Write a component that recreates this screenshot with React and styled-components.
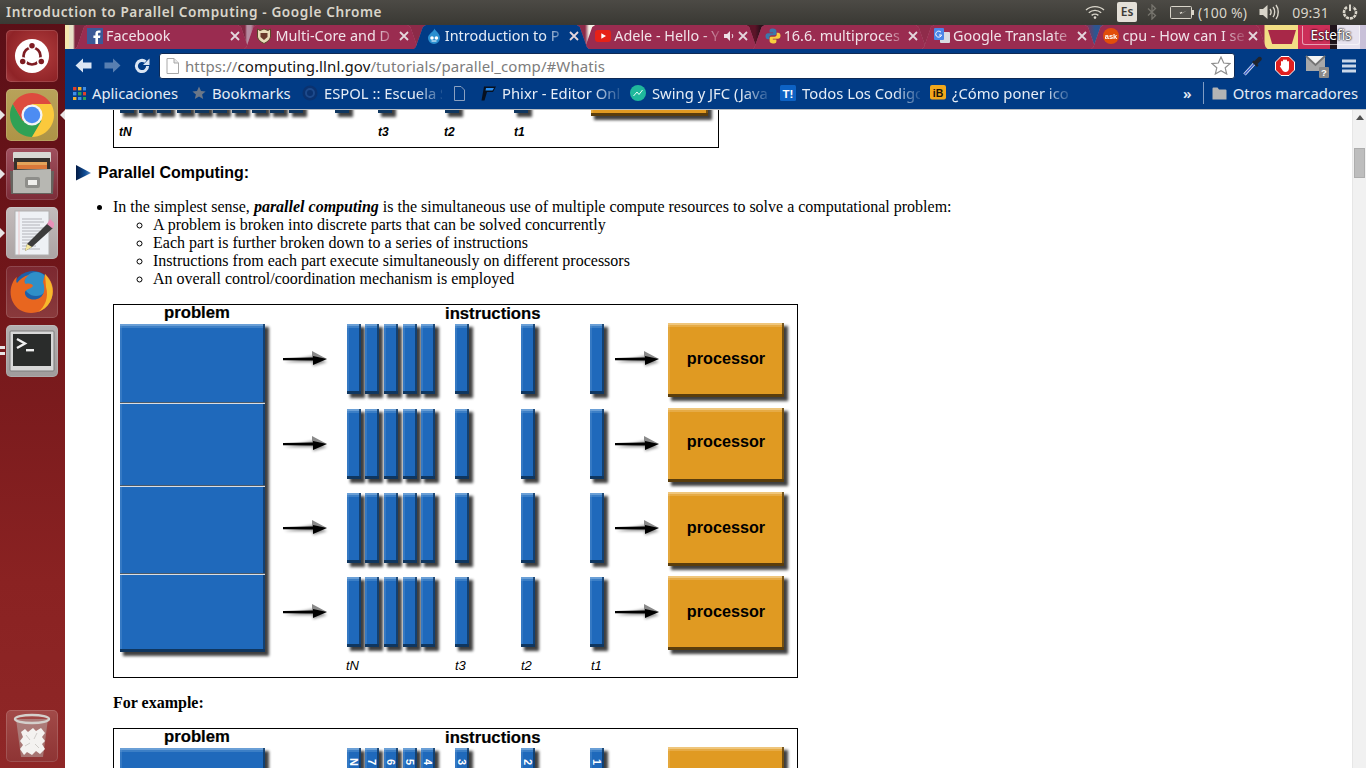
import React from 'react';
import styled, { createGlobalStyle } from 'styled-components';

const UI_FONT = '"Noto Sans", "Open Sans", sans-serif';

const GlobalStyle = createGlobalStyle`
  html, body {
    margin: 0;
    padding: 0;
    width: 1366px;
    height: 768px;
    overflow: hidden;
    background: #fff;
  }
  #root { height: 768px; }
`;

const Screen = styled.div`
  width: 1366px;
  height: 768px;
  display: flex;
  flex-direction: column;
  overflow: hidden;
`;

/* ---------- ubuntu panel ---------- */
const Panel = styled.header`
  flex: 0 0 24px;
  display: flex;
  align-items: center;
  padding: 0 8px 0 6px;
  box-sizing: border-box;
  background: linear-gradient(#4c4a45, #3a3934);
  color: #d9d5ca;
  font: 400 14px ${UI_FONT};
`;

const WindowTitle = styled.div`
  flex: 1;
  padding-bottom: 2px;
  font-weight: 600;
  font-size: 13.6px;
  letter-spacing: 0.61px;
  white-space: nowrap;
`;

const Indicators = styled.div`
  display: flex;
  align-items: center;
  height: 24px;
`;

const LangBox = styled.span`
  width: 20px;
  height: 20px;
  margin: 0 10px 0 12px;
  border-radius: 2px;
  background: #e4e0d8;
  color: #3c3b37;
  font-size: 12px;
  font-weight: 600;
  line-height: 20px;
  text-align: center;
`;

const PanelText = styled.span`
  margin-left: ${p => p.$ml}px;
  font-size: 14px;
  letter-spacing: 0.2px;
  white-space: nowrap;
`;

const PanelGap = styled.span`
  width: ${p => p.$w}px;
`;

const Body = styled.div`
  flex: 1;
  display: flex;
  min-height: 0;
`;

/* ---------- launcher ---------- */
const Launcher = styled.nav`
  flex: 0 0 65px;
  display: flex;
  flex-direction: column;
  align-items: flex-start;
  gap: 7px;
  padding: 6px 0 6px 6px;
  box-sizing: border-box;
  background: linear-gradient(#5b0f17, #6e1519 30%, #8a2222 75%, #8f2727);
`;

const Tile = styled.div`
  position: relative;
  width: 52px;
  height: 52px;
  display: flex;
  align-items: center;
  justify-content: center;
  border-radius: 5px;
  background: ${p => p.$bg};
  box-shadow: inset 0 0 0 1px rgba(255, 255, 255, 0.14);
  ${p => p.$bottom && 'margin-top: auto;'}
`;

const Pip = styled.span`
  position: absolute;
  top: ${p => p.$top || 21}px;
  ${p => p.$right
    ? 'right: -7px; border-right: 5px solid #e8e4e4;'
    : 'left: -6px; border-left: 5px solid #e8e4e4;'}
  border-top: 5px solid transparent;
  border-bottom: 5px solid transparent;
`;

const SmallPip = styled.span`
  position: absolute;
  left: -6px;
  top: ${p => p.$top}px;
  width: 5px;
  height: 3px;
  background: #e8e4e4;
`;

/* ---------- browser ---------- */
const Browser = styled.div`
  flex: 1;
  min-width: 0;
  display: flex;
  flex-direction: column;
`;

const TabStrip = styled.div`
  position: relative;
  flex: 0 0 25px;
  display: flex;
  align-items: flex-end;
  padding-left: 10px;
  background: linear-gradient(90deg, #f4e7b0 0 4px, #e9e2c8 4px 8px, #7f2741 10px 180px, #b58ba0 182px 186px, #8c2a48 190px 520px, #f5efe6 524px 532px, #5c1428 536px 690px, #30101c 695px 700px, #8f2b4a 706px 1020px, #2d5590 1030px 1034px, #9a2a4d 1040px 1199px, #f2df85 1200px 1233px, #cc2e58 1233px 1265px, #20141c 1265px 1272px, #e6e2ee 1272px 1295px, #c8c0d8 1295px);
  border-top: 1px solid #3a3934;
  box-sizing: border-box;
`;

const TabShell = styled.div`
  position: relative;
  z-index: ${p => (p.$active ? 2 : 1)};
  flex: 0 0 175px;
  height: 24px;
  margin-right: -5.6px;
  filter: drop-shadow(0.5px 0 0 rgba(255, 255, 255, 0.35));
`;

const TabBody = styled.div`
  height: 100%;
  display: flex;
  align-items: center;
  gap: 3px;
  padding: 0 10px 3px 12px;
  box-sizing: border-box;
  background: ${p => (p.$active ? '#013b85' : '#9a2c50')};
  color: ${p => (p.$active ? '#e6edf6' : '#f0e2e8')};
  font: 400 14.4px ${UI_FONT};
  clip-path: polygon(0 100%, 2px 92%, 9px 8%, 12px 0, calc(100% - 12px) 0, calc(100% - 9px) 8%, calc(100% - 2px) 92%, 100% 100%);
`;

const TabTitle = styled.span`
  flex: 1;
  min-width: 0;
  overflow: hidden;
  white-space: nowrap;
  mask-image: linear-gradient(90deg, #000 82%, rgba(0, 0, 0, 0.15));
`;

const NewTab = styled.div`
  width: 28px;
  height: 14px;
  margin: 0 0 5px 6px;
  background: #a82848;
  clip-path: polygon(0 0, 100% 0, 85% 100%, 15% 100%);
`;

const Profile = styled.span`
  position: absolute;
  top: 1px;
  right: 6px;
  width: 56px;
  height: 18px;
  border: 1px solid rgba(255, 255, 255, 0.55);
  border-top: 0;
  border-radius: 0 0 3px 3px;
  color: #fff;
  font: 400 13.5px/19px ${UI_FONT};
  text-align: center;
  text-shadow: 0 0 2px #000, 0 0 2px #000;
`;

const Toolbar = styled.div`
  flex: 0 0 33px;
  display: flex;
  align-items: center;
  padding-left: 4px;
  box-sizing: border-box;
  background: #013b85;
`;

const NavButton = styled.span`
  flex: 0 0 29px;
  display: flex;
  justify-content: center;
  opacity: ${p => (p.$dim ? 0.4 : 1)};
`;

const Omnibox = styled.div`
  flex: 0 0 1076px;
  height: 26px;
  margin-left: 3px;
  display: flex;
  align-items: center;
  padding: 0 3px 0 6px;
  box-sizing: border-box;
  border: 1px solid #0e2a55;
  border-radius: 3px;
  background: #fff;
  font: 400 15px ${UI_FONT};
  color: #7c7c7c;
`;

const Url = styled.div`
  flex: 1;
  margin-left: 6px;
  white-space: nowrap;
  letter-spacing: 0.1px;
  b { font-weight: 400; color: #111; }
`;

const Actions = styled.div`
  display: flex;
  align-items: center;
  margin-left: 2px;
`;

const ActionSlot = styled.span`
  flex: 0 0 32px;
  width: 32px;
  height: 24px;
  display: flex;
  align-items: center;
  justify-content: center;
`;

const BookmarkBar = styled.div`
  flex: 0 0 27px;
  display: flex;
  align-items: center;
  padding: 0 8px 5px 8px;
  box-sizing: border-box;
  background: #013b85;
  border-bottom: 1px solid #b9bdc2;
  color: #e6edf6;
  font: 400 14.8px ${UI_FONT};
`;

const Bookmark = styled.div`
  flex: 0 0 ${p => p.$w}px;
  width: ${p => p.$w}px;
  display: flex;
  align-items: center;
  gap: 6px;
  overflow: hidden;
`;

const BookmarkLabel = styled.span`
  white-space: nowrap;
  ${p => p.$fade && `
    max-width: 118px;
    overflow: hidden;
    mask-image: linear-gradient(90deg, #000 78%, rgba(0, 0, 0, 0.15));
  `}
`;

const BarEnd = styled.div`
  margin-left: auto;
  display: flex;
  align-items: center;
  gap: 6px;
`;

const Chevrons = styled.span`
  margin-right: 5px;
  font-size: 15px;
  font-weight: 600;
`;

const BarDivider = styled.span`
  width: 1px;
  height: 22px;
  margin-right: 2px;
  background: #7f9cc4;
`;

const Viewport = styled.div`
  flex: 1;
  min-height: 0;
  display: flex;
`;

const PageArea = styled.main`
  flex: 1;
  min-width: 0;
  overflow: hidden;
  color: #000;
  font: 16px/18px "Liberation Serif", "Times New Roman", serif;
`;

const Scrollbar = styled.div`
  position: relative;
  flex: 0 0 14px;
  background: #f1f1f1;
  border-left: 1px solid #e6e6e6;
  box-sizing: border-box;
`;

const ScrollUp = styled.span`
  position: absolute;
  top: 5px;
  left: 3px;
  border-left: 4px solid transparent;
  border-right: 4px solid transparent;
  border-bottom: 5px solid #505050;
`;

const ScrollThumb = styled.span`
  position: absolute;
  top: 38px;
  left: 1px;
  width: 11px;
  height: 30px;
  background: #bdbdbd;
  border: 1px solid #adadad;
  box-sizing: border-box;
`;

/* ---------- page content ---------- */
const PartialFrame = styled.div`
  width: 604px;
  height: 37px;
  margin-left: 48px;
  border: 1px solid #000;
  border-top: 0;
  overflow: hidden;
`;

const SectionHeading = styled.h2`
  display: flex;
  align-items: center;
  gap: 7px;
  height: 18px;
  margin: 16px 0 0 11px;
  font: 700 16px/18px "Liberation Sans", Arial, sans-serif;
`;

const OuterList = styled.ul`
  margin: 16px 0 0;
  padding-left: 48px;
`;

const InnerList = styled.ul`
  margin: 0;
  padding-left: 40px;
  list-style: circle;
`;

const Frame = styled.div`
  width: 683px;
  height: 372px;
  margin: ${p => p.$mt}px 0 0 48px;
  border: 1px solid #000;
  overflow: hidden;
`;

const Caption = styled.p`
  margin: 16px 0 0 48px;
  font-weight: 700;
`;

const Drawing = styled.svg`
  display: block;
`;

const BLUE = { fill: '#1f69bb', light: '#6a9fd6', dark: '#0f365f' };
const ORANGE = { fill: '#e09a22', light: '#efc67c', dark: '#5a3d0c' };
const BAR_X = [347, 365, 384, 403, 421, 455, 521, 590];
const BAR_NAMES = ['N', '7', '6', '5', '4', '3', '2', '1'];
const ROW_TOPS = [324, 409, 493, 577];
const PROC_TOPS = [323, 408, 492, 576];
const ARROW_Y = [359, 444, 528, 612];
const PROC_TEXT_Y = [364, 447, 533, 617];
const LABEL_FONT = '"Liberation Sans", Arial, sans-serif';

const Defs = ({ id }) => (
  <defs>
    <filter id={id} x="-30%" y="-30%" width="160%" height="160%">
      <feGaussianBlur stdDeviation="1.8" />
    </filter>
  </defs>
);

const Bevel = ({ x, y, w, h, tone, blur }) => (
  <g>
    <rect x={x + 3} y={y + 3} width={w + 1} height={h + 1} fill="#000" opacity="0.75" filter={`url(#${blur})`} />
    <rect x={x} y={y} width={w} height={h} fill={tone.fill} />
    <rect x={x} y={y} width="2" height={h} fill={tone.light} opacity="0.3" />
    <rect x={x} y={y} width={w} height="2" fill={tone.light} />
    <rect x={x} y={y + 2} width={w} height="2" fill={tone.light} opacity="0.4" />
    <rect x={x + w - 2} y={y} width="2" height={h} fill={tone.dark} opacity="0.8" />
    <rect x={x} y={y + h - 3} width={w} height="3" fill={tone.dark} />
  </g>
);

const Arrow = ({ x, y, blur }) => (
  <g>
    <path d={`M${x + 1} ${y + 3} L${x + 30} ${y + 3} L${x + 30} ${y + 7} L${x + 44} ${y + 3} L${x + 30} ${y - 3} Z`} fill="#000" opacity="0.45" filter={`url(#${blur})`} />
    <path d={`M${x + 29} ${y - 8} L${x + 44} ${y} L${x + 29} ${y} Z`} fill="#8a8a8a" />
    <path d={`M${x} ${y - 1} L${x + 30} ${y - 1.6} L${x + 30} ${y - 3} L${x + 44} ${y} L${x + 30} ${y + 6} L${x + 30} ${y + 1.4} L${x} ${y + 1.2} Z`} fill="#000" />
  </g>
);

const Heading = ({ x, y, children }) => (
  <text x={x} y={y} fontFamily={LABEL_FONT} fontWeight="700" fontSize="16.7" fill="#000" stroke="#000" strokeWidth="0.2">{children}</text>
);

const Tick = ({ x, y, size = 13, weight = 400, children }) => (
  <text x={x} y={y} fontFamily={LABEL_FONT} fontStyle="italic" fontWeight={weight} fontSize={size} fill="#000">{children}</text>
);

// both big figures share the same picture, the second one has numbered bars
const ParallelFigure = ({ id, numbered }) => (
  <Drawing width="683" height="372" viewBox="114 305 683 372">
    <Defs id={id} />
    <Heading x={164} y={318}>problem</Heading>
    <Heading x={445} y={319}>instructions</Heading>
    <Bevel x={120} y={324} w={145} h={328} tone={BLUE} blur={id} />
    {[403, 486, 574].map(y => (
      <g key={y}>
        <rect x="120" y={y - 1} width="145" height="1" fill="#4c5a68" />
        <rect x="120" y={y} width="145" height="1" fill="#d9dee4" />
      </g>
    ))}
    {ROW_TOPS.map((top, r) => (
      <g key={top}>
        <Arrow x={283} y={ARROW_Y[r]} blur={id} />
        {BAR_X.map((x, i) => (
          <g key={x}>
            <Bevel x={x} y={top} w={14} h={70} tone={BLUE} blur={id} />
            {numbered && r === 0 && (
              <text x={x + 7} y={338} transform={`rotate(90 ${x + 7} 338)`} dy="4" textAnchor="middle" fontFamily={LABEL_FONT} fontWeight="700" fontSize="11" fill="#fff">{BAR_NAMES[i]}</text>
            )}
          </g>
        ))}
        <Arrow x={615} y={ARROW_Y[r]} blur={id} />
        <Bevel x={668} y={PROC_TOPS[r]} w={116} h={74} tone={ORANGE} blur={id} />
        <text x={726} y={PROC_TEXT_Y[r]} textAnchor="middle" fontFamily={LABEL_FONT} fontWeight="700" fontSize="16.2" fill="#000">processor</text>
      </g>
    ))}
    <Tick x={346} y={670}>tN</Tick>
    <Tick x={455} y={670}>t3</Tick>
    <Tick x={521} y={670}>t2</Tick>
    <Tick x={591} y={670}>t1</Tick>
  </Drawing>
);

const PartialFigure = () => (
  <Drawing width="604" height="37" viewBox="114 109 604 37">
    <Defs id="topBlur" />
    {[120, 139, 157, 177, 195, 213, 232, 252, 270, 289, 335, 378, 445, 514].map(x => (
      <Bevel key={x} x={x} y={60} w={14} h={52} tone={BLUE} blur="topBlur" />
    ))}
    <Bevel x={591} y={60} w={117} h={55} tone={ORANGE} blur="topBlur" />
    <Tick x={119} y={135} size={12} weight={700}>tN</Tick>
    <Tick x={378} y={135} size={12} weight={700}>t3</Tick>
    <Tick x={444} y={135} size={12} weight={700}>t2</Tick>
    <Tick x={514} y={135} size={12} weight={700}>t1</Tick>
  </Drawing>
);

/* ---------- launcher icons ---------- */
const UbuntuIcon = () => (
  <svg width="36" height="36" viewBox="0 0 38 38">
    <circle cx="19" cy="19" r="18" fill="#fff" />
    <circle cx="19" cy="19" r="9" fill="none" stroke="#7e1c22" strokeWidth="2.8" />
    <g fill="#fff"><circle cx="19" cy="8.2" r="4.2" /><circle cx="9.6" cy="24.6" r="4.2" /><circle cx="28.4" cy="24.6" r="4.2" /></g>
    <g fill="#7e1c22"><circle cx="19" cy="8.2" r="2.9" /><circle cx="9.2" cy="24.9" r="2.9" /><circle cx="28.8" cy="24.9" r="2.9" /></g>
  </svg>
);

const ChromeIcon = () => (
  <svg width="46" height="46" viewBox="0 0 48 48">
    <path d="M4.1 12.5A23 23 0 0 0 24 47L34 30 14 30Z" fill="#2fa155" />
    <path d="M43.9 12.5A23 23 0 0 1 24 47L34 30 24 12.5Z" fill="#fbc93c" />
    <path d="M24 12.5H43.9A23 23 0 0 0 4.1 12.5L14 30Z" fill="#dd4b3e" />
    <circle cx="24" cy="24" r="11" fill="#f4f4f4" />
    <circle cx="24" cy="24" r="8.6" fill="#4d8cf2" />
  </svg>
);

const FilesIcon = () => (
  <svg width="44" height="46" viewBox="0 0 44 46">
    <rect x="3" y="1" width="38" height="10" rx="1" fill="#d8d8d4" />
    <rect x="4" y="7" width="36" height="14" fill="#35302c" />
    <rect x="7" y="11" width="30" height="3" fill="#e3a35a" />
    <rect x="7" y="14" width="30" height="4" fill="#d9783a" />
    <path d="M1 43 L0 20 H44 L43 43Z" fill="#66645f" />
    <path d="M3 42 L3 19 L41 18 L41 42Z" fill="#b7b7b2" />
    <rect x="15" y="26" width="15" height="11" rx="2" fill="#8e8e8a" />
    <rect x="18" y="29" width="9" height="5" fill="#efefec" />
  </svg>
);

const EditorIcon = () => (
  <svg width="44" height="46" viewBox="0 0 44 46">
    <rect x="5" y="1" width="34" height="44" fill="#eef1f5" stroke="#b0b0b0" />
    <path d="M9 1V45" stroke="#e8a8a8" strokeWidth="0.6" />
    <g stroke="#9a9aa2" strokeWidth="0.7">
      <path d="M12 9H32M12 12H34M12 15H30M12 18H34M12 21H30M12 24H28M12 27H24M12 30H22M12 33H20M12 36H26M12 39H30" />
    </g>
    <path d="M38 13 L43 18 L22 37 L15 41 L17 34 Z" fill="#3c3c3c" />
    <path d="M37 14 L40 9 L45 14 L42.5 18.5 Z" fill="#e890b8" />
    <path d="M17 34 L22 37 L15 41 Z" fill="#f4e8a0" />
  </svg>
);

const FirefoxIcon = () => (
  <svg width="46" height="46" viewBox="0 0 46 46">
    <circle cx="24" cy="22" r="20" fill="#1d5fa8" />
    <circle cx="27" cy="15" r="12" fill="#2f8fc8" />
    <path d="M36 5 C45 13 46 24 41 33 C35 44 21 47 11 41 C2 35 -1 23 4 13 C5 11 6 9 8 8 C7 11 7 13 8 14 C11 10 15 7 20 6 C16 9 14 13 17 15 C20 14 24 15 24 17 C22 20 17 20 16 23 C15 28 22 32 28 30 C35 28 37 20 34 13 Z" fill="#e8661f" />
    <path d="M36 5 C44 13 46 24 41 33 C38 38 34 41 29 43 C36 38 40 28 37 18 Z" fill="#f7b92c" />
  </svg>
);

const TerminalIcon = () => (
  <svg width="46" height="42" viewBox="0 0 46 42">
    <rect x="1" y="1" width="44" height="40" rx="1" fill="#d8d8d8" stroke="#7d7d7d" />
    <rect x="4" y="4" width="38" height="32" fill="#2a2c2b" />
    <path d="M8 9 L16 13.5 L8 18" fill="none" stroke="#f0f0f0" strokeWidth="2.4" />
    <rect x="17" y="19" width="8" height="2.4" fill="#f0f0f0" />
  </svg>
);

const TrashIcon = () => (
  <svg width="38" height="46" viewBox="0 0 38 46">
    <path d="M3 6 L8 44 H30 L35 6Z" fill="#bbb2ae" opacity="0.5" />
    <ellipse cx="19" cy="6" rx="17" ry="4" fill="none" stroke="#d4d0cc" strokeWidth="2.4" />
    <path d="M8 19 L12 16 L15 19 L20 15 L23 18 L28 15 L32 20 L29 24 L32 28 L29 31 L32 36 L27 41 L23 38 L19 42 L14 39 L11 42 L7 36 L10 32 L7 28 L10 24Z" fill="#f4f2f0" />
    <path d="M13 22L17 27M24 20L21 26M12 33L17 30M26 35L22 31" stroke="#c4c0bc" strokeWidth="0.8" />
  </svg>
);

/* ---------- favicons ---------- */
const FacebookIcon = () => (
  <svg width="16" height="16" viewBox="0 0 16 16">
    <rect width="16" height="16" fill="#3b5998" />
    <path d="M11 16V10H13L13.4 7.5H11V6C11 5.2 11.3 4.8 12.2 4.8H13.5V2.6C13 2.5 12.4 2.5 11.6 2.5 9.6 2.5 8.4 3.7 8.4 5.7V7.5H6.4V10H8.4V16Z" fill="#fff" />
  </svg>
);
const ShieldIcon = () => (
  <svg width="16" height="16" viewBox="0 0 16 16">
    <path d="M1.5 1 L4 2.5 L8 1 L12 2.5 L14.5 1 L14.5 9 C14 12 11 14 8 15.5 C5 14 2 12 1.5 9Z" fill="#e8dcb8" stroke="#5a4a2a" />
    <path d="M4.5 5H11.5V9L8 12 4.5 9Z" fill="#6a3a2a" />
  </svg>
);
const DrupalIcon = () => (
  <svg width="16" height="16" viewBox="0 0 16 16">
    <path d="M8.5 0.5 C9 3 14 5 14 10 A6 6 0 0 1 2 10 C2 6 7.5 4 8.5 0.5Z" fill="#2a8fd0" />
    <circle cx="6" cy="10" r="1.8" fill="#fff" />
    <circle cx="10.4" cy="10" r="1.8" fill="#fff" />
    <path d="M5.5 13H10.5" stroke="#fff" />
  </svg>
);
const YoutubeIcon = () => (
  <svg width="16" height="16" viewBox="0 0 16 16">
    <rect y="2" width="16" height="12" rx="3" fill="#e62117" />
    <path d="M6.3 5.2 L11 8 L6.3 10.8Z" fill="#fff" />
  </svg>
);
const SpeakerTabIcon = () => (
  <svg width="11" height="12" viewBox="0 0 11 12">
    <path d="M0 4H3L6 1V11L3 8H0Z" fill="#eee0e6" />
    <path d="M8 4C9 5.2 9 6.8 8 8" fill="none" stroke="#eee0e6" />
  </svg>
);
const PythonIcon = () => (
  <svg width="16" height="16" viewBox="0 0 16 16">
    <path d="M8 0.5C4.5 0.5 4.6 2 4.6 3V4.6H8.2V5.2H3C1.5 5.2 0.5 6.3 0.5 8.2S1.5 11.2 3 11.2H4.3V9.4C4.3 8 5.4 7.2 6.6 7.2H9.8C10.8 7.2 11.4 6.5 11.4 5.6V3C11.4 1.5 10 0.5 8 0.5Z" fill="#3b78ab" />
    <path d="M8 15.5C11.5 15.5 11.4 14 11.4 13V11.4H7.8V10.8H13C14.5 10.8 15.5 9.7 15.5 7.8S14.5 4.8 13 4.8H11.7V6.6C11.7 8 10.6 8.8 9.4 8.8H6.2C5.2 8.8 4.6 9.5 4.6 10.4V13C4.6 14.5 6 15.5 8 15.5Z" fill="#f8cd3e" />
  </svg>
);
const TranslateIcon = () => (
  <svg width="16" height="16" viewBox="0 0 16 16">
    <rect x="6" y="4" width="10" height="11" rx="1" fill="#d8dce2" />
    <rect width="10" height="12" rx="1" fill="#4a86e8" />
    <path d="M7 4.2A3 3 0 1 0 7.6 7H5" fill="none" stroke="#fff" />
  </svg>
);
const AskIcon = () => (
  <svg width="16" height="16" viewBox="0 0 16 16">
    <circle cx="8" cy="8" r="8" fill="#e24e0a" />
    <text x="8" y="10.5" textAnchor="middle" fontFamily={LABEL_FONT} fontWeight="700" fontSize="7.5" fill="#fff">ask</text>
  </svg>
);

const CloseIcon = () => (
  <svg width="10" height="10" viewBox="0 0 10 10" style={{ flex: '0 0 10px' }}>
    <path d="M1 1L9 9M9 1L1 9" stroke="#e4d6dc" strokeWidth="1.8" />
  </svg>
);

/* ---------- toolbar icons ---------- */
const BackIcon = () => (
  <svg width="17" height="15" viewBox="0 0 17 15">
    <path d="M8 0.5 L0.5 7.5 L8 14.5 L8 10.5 L16.5 10.5 L16.5 4.5 L8 4.5Z" fill="#dbe6f4" />
  </svg>
);
const ForwardIcon = () => (
  <svg width="17" height="15" viewBox="0 0 17 15">
    <path d="M9 0.5 L16.5 7.5 L9 14.5 L9 10.5 L0.5 10.5 L0.5 4.5 L9 4.5Z" fill="#dbe6f4" />
  </svg>
);
const ReloadIcon = () => (
  <svg width="16" height="16" viewBox="0 0 16 16">
    <path d="M13.6 8A5.6 5.6 0 1 1 11.6 3.7" fill="none" stroke="#dbe6f4" strokeWidth="3" />
    <path d="M9 7H15.5V0.5Z" fill="#dbe6f4" />
  </svg>
);
const PageIcon = () => (
  <svg width="13" height="16" viewBox="0 0 13 16">
    <path d="M1 0.5H8L12.5 5V15.5H1Z" fill="#fff" stroke="#a8a8a8" />
    <path d="M8 0.5V5H12.5" fill="#e8e8e8" stroke="#a8a8a8" />
  </svg>
);
const StarIcon = () => (
  <svg width="20" height="19" viewBox="0 0 20 19">
    <path d="M10 1 L12.7 7 L19 7.6 L14.2 11.8 L15.7 18 L10 14.8 L4.3 18 L5.8 11.8 L1 7.6 L7.3 7Z" fill="#fff" stroke="#8e8e8e" strokeWidth="1.2" />
  </svg>
);
const DropperIcon = () => (
  <svg width="20" height="20" viewBox="0 0 20 20">
    <path d="M1.5 18.5 L11 8" stroke="#dfe6f2" strokeWidth="3.2" />
    <path d="M1.5 18.5 L11 8" stroke="#3d5ec8" strokeWidth="1.6" />
    <path d="M9 6 L14 11 L15.5 9.5 L14.5 8 L18.5 4 A2.2 2.2 0 0 0 15.5 1 L11.5 5 L10.5 4.5Z" fill="#20242c" />
  </svg>
);
const AdblockIcon = () => (
  <svg width="20" height="20" viewBox="0 0 20 20">
    <path d="M6 0.5H14L19.5 6V14L14 19.5H6L0.5 14V6Z" fill="#e0201f" stroke="#fff" />
    <path d="M6 10V6A1 1 0 0 1 8 6V4.5A1 1 0 0 1 10 4.5V4.5A1 1 0 0 1 12 4.5V6A1 1 0 0 1 14 6V12C14 14.5 12.5 16 10.5 16 8.5 16 7.8 15 7 13.5L5 10.6C4.5 9.5 5.5 9 6 10Z" fill="#fff" />
  </svg>
);
const MailIcon = () => (
  <svg width="24" height="24" viewBox="0 0 24 24">
    <path d="M1 2H20V17H1Z" fill="#a8a8a8" />
    <path d="M1 2L10.5 11L20 2" fill="#f2f2f2" />
    <path d="M1 2L10.5 11L20 2" fill="none" stroke="#747474" strokeWidth="1.8" />
    <rect x="14" y="13" width="10" height="11" rx="1" fill="#8a8a8a" />
    <text x="19" y="22" textAnchor="middle" fontFamily={LABEL_FONT} fontWeight="700" fontSize="9.5" fill="#fff">?</text>
  </svg>
);
const MenuIcon = () => (
  <svg width="14" height="14" viewBox="0 0 14 14">
    <path d="M0 0.5H14V3.5H0ZM0 5.5H14V8.5H0ZM0 10.5H14V13.5H0Z" fill="#ccd8e8" />
  </svg>
);

/* ---------- bookmark icons ---------- */
const AppsIcon = () => {
  const colors = ['#e0402c', '#f2b32c', '#3f8ee8', '#3f8ee8', '#2fa155', '#e0402c', '#f2b32c', '#3f8ee8', '#2fa155'];
  return (
    <svg width="13" height="13" viewBox="0 0 13 13" style={{ flex: '0 0 13px' }}>
      {colors.map((c, i) => (
        <rect key={i} x={(i % 3) * 5} y={Math.floor(i / 3) * 5} width="3.4" height="3.4" fill={c} />
      ))}
    </svg>
  );
};
const BookmarkStar = () => (
  <svg width="14" height="14" viewBox="0 0 14 14" style={{ flex: '0 0 14px' }}>
    <path d="M7 0.5 L9 5 L13.6 5.4 L10.1 8.5 L11.2 13 L7 10.6 L2.8 13 L3.9 8.5 L0.4 5.4 L5 5Z" fill="#6b7788" />
  </svg>
);
const EspolIcon = () => (
  <svg width="16" height="16" viewBox="0 0 16 16" style={{ flex: '0 0 16px' }}>
    <circle cx="8" cy="8" r="7.5" fill="#0a3270" />
    <circle cx="8" cy="8" r="4" fill="none" stroke="#1d4a8c" strokeWidth="2" />
  </svg>
);
const DocIcon = () => (
  <svg width="11" height="15" viewBox="0 0 11 15" style={{ flex: '0 0 11px' }}>
    <path d="M0.5 0.5H7L10.5 4V14.5H0.5Z" fill="none" stroke="#8aa0c0" />
  </svg>
);
const PhixrIcon = () => (
  <svg width="15" height="15" viewBox="0 0 15 15" style={{ flex: '0 0 15px' }}>
    <path d="M3 0.5H15L12 6H6L3.5 14.5H0.5Z" fill="#071020" />
    <path d="M5 2H13L11.5 4.5H4.5Z" fill="#2b8ff0" />
  </svg>
);
const SwingIcon = () => (
  <svg width="16" height="16" viewBox="0 0 16 16" style={{ flex: '0 0 16px' }}>
    <circle cx="8" cy="8" r="8" fill="#1fb89c" />
    <path d="M3.5 11L7 7L9 9.5L12.5 5" fill="none" stroke="#e8fff8" />
  </svg>
);
const TodosIcon = () => (
  <svg width="16" height="16" viewBox="0 0 16 16" style={{ flex: '0 0 16px' }}>
    <rect width="16" height="16" rx="1.5" fill="#0d62c4" />
    <text x="8" y="12.5" textAnchor="middle" fontFamily={LABEL_FONT} fontWeight="700" fontSize="11.5" fill="#fff">T!</text>
  </svg>
);
const IbIcon = () => (
  <svg width="16" height="16" viewBox="0 0 16 16" style={{ flex: '0 0 16px' }}>
    <rect width="16" height="14.5" rx="2" fill="#f1a81c" />
    <text x="8" y="11.5" textAnchor="middle" fontFamily={LABEL_FONT} fontWeight="700" fontSize="10.5" fill="#1a1204">iB</text>
  </svg>
);
const FolderIcon = () => (
  <svg width="15" height="13" viewBox="0 0 15 13" style={{ flex: '0 0 15px' }}>
    <path d="M0.5 1.5A1 1 0 0 1 1.5 0.5H5.5L7 2.5H13.5A1 1 0 0 1 14.5 3.5V12.5H0.5Z" fill="#b4b4b4" />
  </svg>
);

/* ---------- panel icons ---------- */
const WifiIcon = () => (
  <svg width="20" height="14" viewBox="0 0 20 14">
    <path d="M1 5C6 0.5 14 0.5 19 5M3.8 7.8C7.5 4.6 12.5 4.6 16.2 7.8M6.6 10.4C8.6 8.9 11.4 8.9 13.4 10.4" fill="none" stroke="#d9d5ca" strokeWidth="1.4" />
    <circle cx="10" cy="12.6" r="1.3" fill="#d9d5ca" />
  </svg>
);
const BluetoothIcon = () => (
  <svg width="10" height="16" viewBox="0 0 10 16" style={{ marginRight: 13 }}>
    <path d="M1 4.5L8.5 11.5L5 15V1L8.5 4.5L1 11.5" fill="none" stroke="#77756e" strokeWidth="1.3" />
  </svg>
);
const BatteryIcon = () => (
  <svg width="25" height="13" viewBox="0 0 25 13">
    <rect x="0.5" y="0.5" width="21" height="12" rx="1" fill="#55534e" stroke="#d9d5ca" />
    <rect x="22" y="4" width="2" height="5" fill="#d9d5ca" />
    <path d="M5 8.5L12 5.8V7.5L17 4.5L10 8V6.6Z" fill="#e6e2d8" />
  </svg>
);
const VolumeIcon = () => (
  <svg width="20" height="16" viewBox="0 0 20 16">
    <path d="M0.5 5H4L8.5 1V15L4 11H0.5Z" fill="#d9d5ca" />
    <path d="M11 5C12.2 6.6 12.2 9.4 11 11M14 3C16.2 5.6 16.2 10.4 14 13M17 1C20 5 20 11 17 15" fill="none" stroke="#d9d5ca" strokeWidth="1.4" />
  </svg>
);
const PowerIcon = () => (
  <svg width="16" height="16" viewBox="0 0 16 16">
    <path d="M5 3.2A6 6 0 1 0 11 3.2" fill="none" stroke="#d9d5ca" strokeWidth="2.6" strokeDasharray="3 0.8" />
    <path d="M8 0.5V7" stroke="#d9d5ca" strokeWidth="2" />
  </svg>
);

const TriangleIcon = () => (
  <svg width="15" height="16" viewBox="0 0 15 16">
    <defs>
      <linearGradient id="headingMark" x1="0" y1="0" x2="1" y2="0">
        <stop offset="0" stopColor="#021a44" />
        <stop offset="0.6" stopColor="#0f4c94" />
        <stop offset="1" stopColor="#5c8cc4" />
      </linearGradient>
    </defs>
    <path d="M0 0 L15 8 L0 15.5Z" fill="url(#headingMark)" />
  </svg>
);

const TABS = [
  { icon: <FacebookIcon />, title: 'Facebook' },
  { icon: <ShieldIcon />, title: 'Multi-Core and D' },
  { icon: <DrupalIcon />, title: 'Introduction to P', active: true },
  { icon: <YoutubeIcon />, title: 'Adele - Hello - Y', audio: true },
  { icon: <PythonIcon />, title: '16.6. multiproces' },
  { icon: <TranslateIcon />, title: 'Google Translate' },
  { icon: <AskIcon />, title: 'cpu - How can I se' },
];

const BOOKMARKS = [
  { icon: <AppsIcon />, label: 'Aplicaciones', w: 119 },
  { icon: <BookmarkStar />, label: 'Bookmarks', w: 110 },
  { icon: <EspolIcon />, label: 'ESPOL :: Escuela S', w: 152, fade: true },
  { icon: <DocIcon />, w: 27 },
  { icon: <PhixrIcon />, label: 'Phixr - Editor Onl', w: 149, fade: true },
  { icon: <SwingIcon />, label: 'Swing y JFC (Java', w: 150, fade: true },
  { icon: <TodosIcon />, label: 'Todos Los Codigo', w: 150, fade: true },
  { icon: <IbIcon />, label: '¿Cómo poner icon', w: 150, fade: true },
];

const App = () => (
  <Screen>
    <GlobalStyle />
    <Panel>
      <WindowTitle>Introduction to Parallel Computing - Google Chrome</WindowTitle>
      <Indicators>
        <WifiIcon />
        <LangBox>Es</LangBox>
        <BluetoothIcon />
        <BatteryIcon />
        <PanelText $ml={3}>(100 %)</PanelText>
        <PanelGap $w={12} />
        <VolumeIcon />
        <PanelText $ml={13}>09:31</PanelText>
        <PanelGap $w={13} />
        <PowerIcon />
      </Indicators>
    </Panel>
    <Body>
      <Launcher>
        <Tile $bg="radial-gradient(circle at 60% 45%, #b54040, #8f2327 75%, #a33a3e)"><UbuntuIcon /></Tile>
        <Tile $bg="linear-gradient(#b8a25a, #ae9446)">
          <Pip />
          <Pip $right />
          <ChromeIcon />
        </Tile>
        <Tile $bg="linear-gradient(#a0505e, #7c2c38)">
          <Pip />
          <FilesIcon />
        </Tile>
        <Tile $bg="linear-gradient(#c4bcbc, #aca4a4)">
          <Pip />
          <EditorIcon />
        </Tile>
        <Tile $bg="linear-gradient(#7c2830, #8a3a3c)"><FirefoxIcon /></Tile>
        <Tile $bg="linear-gradient(#b4b0b0, #a09c9c)">
          <SmallPip $top={21} />
          <SmallPip $top={27} />
          <TerminalIcon />
        </Tile>
        <Tile $bottom $bg="linear-gradient(#a24a48, #8e3434)"><TrashIcon /></Tile>
      </Launcher>
      <Browser>
        <TabStrip>
          {TABS.map(tab => (
            <TabShell key={tab.title} $active={tab.active}>
              <TabBody $active={tab.active}>
                {tab.icon}
                <TabTitle>{tab.title}</TabTitle>
                {tab.audio && <SpeakerTabIcon />}
                <CloseIcon />
              </TabBody>
            </TabShell>
          ))}
          <NewTab />
          <Profile>Estefis</Profile>
        </TabStrip>
        <Toolbar>
          <NavButton><BackIcon /></NavButton>
          <NavButton $dim><ForwardIcon /></NavButton>
          <NavButton><ReloadIcon /></NavButton>
          <Omnibox>
            <PageIcon />
            <Url>https://<b>computing.llnl.gov</b>/tutorials/parallel_comp/#Whatis</Url>
            <StarIcon />
          </Omnibox>
          <Actions>
            <ActionSlot><DropperIcon /></ActionSlot>
            <ActionSlot><AdblockIcon /></ActionSlot>
            <ActionSlot><MailIcon /></ActionSlot>
            <ActionSlot><MenuIcon /></ActionSlot>
          </Actions>
        </Toolbar>
        <BookmarkBar>
          {BOOKMARKS.map((mark, i) => (
            <Bookmark key={i} $w={mark.w}>
              {mark.icon}
              {mark.label && <BookmarkLabel $fade={mark.fade}>{mark.label}</BookmarkLabel>}
            </Bookmark>
          ))}
          <BarEnd>
            <Chevrons>»</Chevrons>
            <BarDivider />
            <FolderIcon />
            <span>Otros marcadores</span>
          </BarEnd>
        </BookmarkBar>
        <Viewport>
          <PageArea>
            <PartialFrame><PartialFigure /></PartialFrame>
            <SectionHeading><TriangleIcon />Parallel Computing:</SectionHeading>
            <OuterList>
              <li>
                In the simplest sense, <b><i>parallel computing</i></b> is the simultaneous use of multiple compute resources to solve a computational problem:
                <InnerList>
                  <li>A problem is broken into discrete parts that can be solved concurrently</li>
                  <li>Each part is further broken down to a series of instructions</li>
                  <li>Instructions from each part execute simultaneously on different processors</li>
                  <li>An overall control/coordination mechanism is employed</li>
                </InnerList>
              </li>
            </OuterList>
            <Frame $mt={16}><ParallelFigure id="figBlur" /></Frame>
            <Caption>For example:</Caption>
            <Frame $mt={16}><ParallelFigure id="figBlurNumbered" numbered /></Frame>
          </PageArea>
          <Scrollbar>
            <ScrollUp />
            <ScrollThumb />
          </Scrollbar>
        </Viewport>
      </Browser>
    </Body>
  </Screen>
);

export default App;
